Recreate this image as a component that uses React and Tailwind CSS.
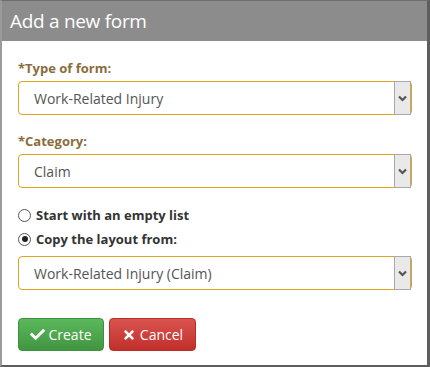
import React from "react";
import { FaCheck, FaTimes } from "react-icons/fa";

const Chevron = () => (
  <svg width="9" height="7" viewBox="0 0 9 7">
    <polyline points="1,1.5 4.5,5 8,1.5" fill="none" stroke="#555" strokeWidth="2.2" />
  </svg>
);

const Select = ({ value }) => (
  <div className="flex h-[34px] items-stretch rounded-[4px] border border-[#e0a41f] bg-white">
    <div className="flex flex-1 items-center pl-[15px] text-[14px] text-[#555]">{value}</div>
    <div className="-my-px flex w-[17px] items-center justify-center border border-[#a9a9a9] bg-[#e9e9e9]">
      <Chevron />
    </div>
  </div>
);

const Radio = ({ checked, label }) => (
  <label className="flex h-[18px] items-center gap-[5px] text-[13px] font-bold leading-[18px] text-[#333]">
    <span className="flex h-[13px] w-[13px] items-center justify-center rounded-full border border-[#555] bg-white">
      {checked && <span className="h-[6px] w-[6px] rounded-full bg-[#222]" />}
    </span>
    {label}
  </label>
);

export default function App() {
  return (
    <div
      className="h-[367px] w-[430px] border-t border-b-2 border-l-2 border-r-[3px] border-t-[#6e6e6e] border-b-[#5e5e5e] border-l-[#9a9a9a] border-r-[#5e5e5e] bg-white"
      style={{ fontFamily: '"Open Sans", sans-serif' }}
    >
      <div className="flex h-[40px] items-center bg-[#8c8c8c] pl-2 text-[19px] tracking-[-0.3px] text-white">
        Add a new form
      </div>

      <div className="pl-4 pr-[15px] pt-[18px]">
        <div className="mb-1 text-[13px] font-bold leading-[18px] text-[#8a6d3b]">*Type of form:</div>
        <Select value="Work-Related Injury" />

        <div className="mb-1 mt-[17px] text-[13px] font-bold leading-[18px] text-[#8a6d3b]">*Category:</div>
        <Select value="Claim" />

        <div className="mt-[18px] flex flex-col gap-[6px]">
          <Radio label="Start with an empty list" />
          <Radio checked label="Copy the layout from:" />
        </div>

        <div className="mt-2">
          <Select value="Work-Related Injury (Claim)" />
        </div>

        <div className="mt-[28px] flex gap-[5px]">
          <button className="flex h-[33px] w-[86px] items-center justify-center gap-[3px] rounded-[4px] border border-[#3e8f3e] bg-gradient-to-b from-[#5cb85c] to-[#419641] text-[14px] text-white">
            <FaCheck size={15} />
            Create
          </button>
          <button className="flex h-[33px] w-[87px] items-center justify-center gap-[4px] rounded-[4px] border border-[#b92c28] bg-gradient-to-b from-[#d9534f] to-[#c12e2a] text-[14px] text-white">
            <FaTimes size={14} />
            Cancel
          </button>
        </div>
      </div>
    </div>
  );
}
